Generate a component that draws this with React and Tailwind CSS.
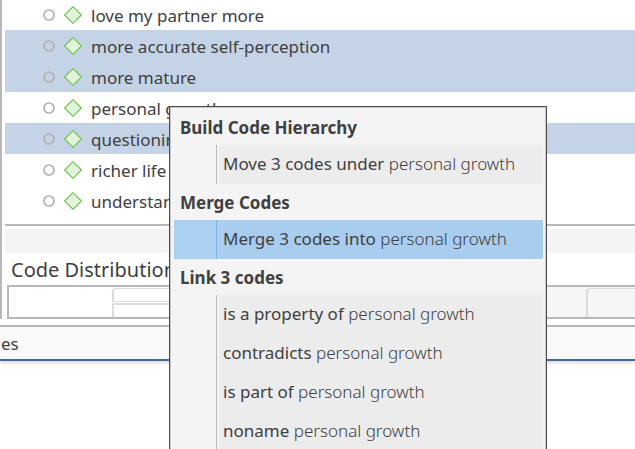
import React from 'react';
import clsx from 'clsx';

const codes = [
    { name: 'love my partner more', selected: false },
    { name: 'more accurate self-perception', selected: true },
    { name: 'more mature', selected: true },
    { name: 'personal growth', selected: false },
    { name: 'questioning', selected: true },
    { name: 'richer life', selected: false },
    { name: 'understanding', selected: false },
];

const menuSections = [
    { title: 'Build Code Hierarchy', items: [{ action: 'Move 3 codes under' }] },
    { title: 'Merge Codes', items: [{ action: 'Merge 3 codes into', active: true }] },
    {
        title: 'Link 3 codes',
        items: [
            { action: 'is a property of' },
            { action: 'contradicts' },
            { action: 'is part of' },
            { action: 'noname' },
        ],
    },
];

const CodeRow = ({ name, selected }) => (
    <li className={clsx('flex h-[31px] items-center pl-[38px]', selected && 'bg-[#c4d4e6]')}>
        <svg width="12" height="12" viewBox="0 0 12 12" className="mr-[9px] shrink-0" fill="none">
            <circle cx="6" cy="6" r="5" stroke="#b1b2b1" strokeWidth="1.7" />
        </svg>
        <svg width="18" height="18" viewBox="0 0 18 18" className="mr-[9px] shrink-0">
            <path d="M9 0.6 17.4 9 9 17.4 0.6 9Z" fill="#e2f3dc" stroke="#71c350" strokeWidth="1.1" strokeLinejoin="round" />
        </svg>
        <span className="whitespace-nowrap pt-[2px]">{name}</span>
    </li>
);

const MenuItem = ({ action, active }) => (
    <button
        role="menuitem"
        className={clsx('flex h-[39px] w-full items-stretch text-left', active ? 'bg-[#aad1f0]' : 'bg-[#f4f4f4]')}
    >
        <span className={clsx('mr-[2px] w-[43px] shrink-0 border-r', active ? 'border-[#7fb5e4]' : 'border-[#b8b8b8]')} />
        <span className={clsx('flex flex-1 items-center whitespace-pre pb-[2px] pl-1', active ? 'bg-[#a8cdee]' : 'bg-[#ececec]')}>
            {action} <span className="font-light">personal growth</span>
        </span>
    </button>
);

const ContextMenu = () => (
    <div role="menu" className="absolute left-[169px] top-[106px] w-[378px] border border-[#4c4c4c] bg-[#f4f4f4] pl-1 pr-[3px] pt-[2px] shadow-[inset_0_0_0_1px_#c8c8c8]">
        {menuSections.map(section => (
            <div key={section.title}>
                <h3 className="flex h-9 items-center px-[6px] pt-[2px] font-bold">{section.title}</h3>
                {section.items.map(item => (
                    <MenuItem key={item.action} {...item} />
                ))}
            </div>
        ))}
    </div>
);

const DistributionChart = () => (
    <div className="ml-[2px] flex h-[34px] border-2 border-r-0 border-[#b8b8b8]">
        <div className="w-[103px] shrink-0" />
        <div className="flex flex-1 flex-col gap-px pt-[1px]">
            <div className="h-[14px] rounded-tl-sm border border-l-2 border-[#dadada]" />
            <div className="flex-1 border-l-2 border-t-2 border-[#dddddd]" />
        </div>
        <div className="w-[174px] bg-[#f5f6f8]" />
        <div className="flex w-[49px] bg-[#f5f6f8] pt-[1px]">
            <div className="flex-1 rounded-tl-sm border-l-2 border-t border-[#dcdcdc]" />
        </div>
    </div>
);

export default function App() {
    return (
        <div className="relative h-screen overflow-hidden bg-white font-['Noto_Sans','Open_Sans',sans-serif] text-[17px] leading-6 text-[#404040]">
            <main className="border-l-2 border-[#b8b8b8] pl-[3px]">
                {/* the list is scrolled, so its first row starts just above the window */}
                <ul className="-mt-px h-[227px] border-b-2 border-[#b8b8b8]">
                    {codes.map(code => (
                        <CodeRow key={code.name} {...code} />
                    ))}
                </ul>
                <div className="mt-[3px] h-6 bg-[#f4f4f4]" />
                <h2 className="flex h-8 items-center pl-[6px] pt-[2px] text-[20px]">Code Distribution</h2>
                <DistributionChart />
            </main>
            <footer className="mt-[6px] flex h-9 items-center border-b-2 border-t-2 border-t-[#b8b8b8] border-b-[#43699a] bg-[#f9f9f9] pl-[1px] pt-[2px] shadow-[0_2px_3px_#dcd8da]">
                es
            </footer>
            <ContextMenu />
        </div>
    );
}
